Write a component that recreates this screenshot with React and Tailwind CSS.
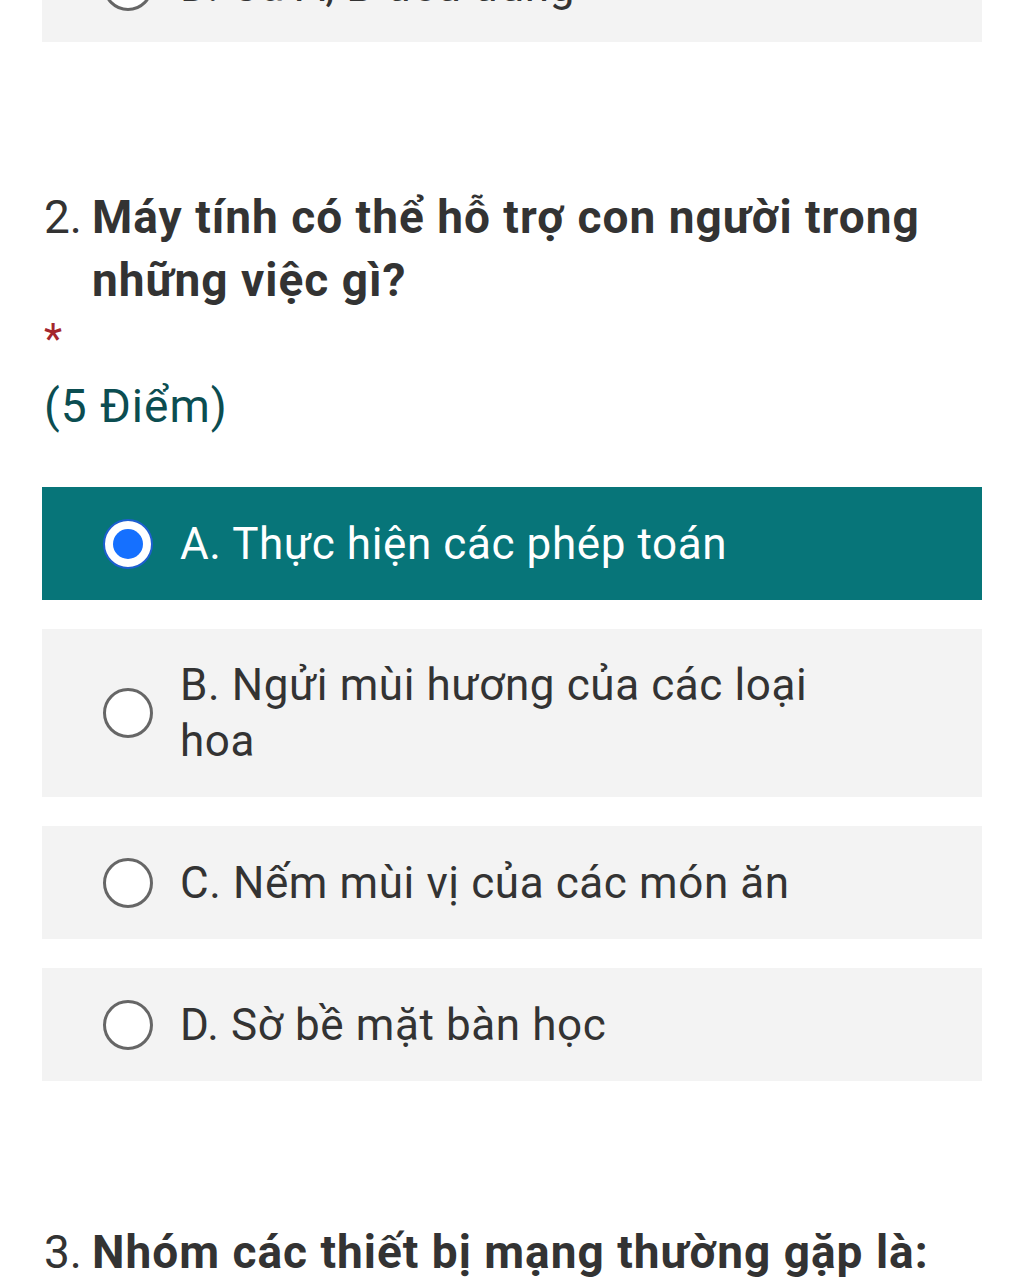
import React from "react";

const options = [
  { id: "A", text: "A. Thực hiện các phép toán", checked: true },
  { id: "B", text: "B. Ngửi mùi hương của các loại hoa" },
  { id: "C", text: "C. Nếm mùi vị của các món ăn" },
  { id: "D", text: "D. Sờ bề mặt bàn học" },
];

function Radio({ checked }) {
  if (checked) {
    return (
      <span className="flex h-[50px] w-[50px] shrink-0 items-center justify-center rounded-full border-2 border-[#1d5fd0] bg-white">
        <span className="h-[30px] w-[30px] rounded-full bg-[#1570ff]" />
      </span>
    );
  }
  return <span className="h-[50px] w-[50px] shrink-0 rounded-full border-[3px] border-[#666] bg-white" />;
}

function Option({ text, checked }) {
  return (
    <div
      className={`flex items-center gap-[27px] pl-[61px] pr-6 py-[28px] min-h-[113px] ${
        checked ? "bg-[#077579] text-white" : "bg-[#f3f3f3] text-[#333]"
      }`}
    >
      <Radio checked={checked} />
      <span className="max-w-[650px] text-[44px] leading-[56px] tracking-[0.6px]">{text}</span>
    </div>
  );
}

export default function App() {
  return (
    <div className="min-h-[1280px] overflow-hidden bg-white px-[42px] font-['Roboto','Noto_Sans',sans-serif] text-[#333]">
      <div className="-mt-[71px]">
        <Option text="D. Cả A, B đều đúng" />
      </div>

      <div className="pt-[144px]">
        <h2 className="flex text-[46px] leading-[63px] tracking-[1px]">
          <span className="w-[50px] shrink-0 pl-[2px] tracking-normal">2.</span>
          <span className="font-bold">Máy tính có thể hỗ trợ con người trong những việc gì?</span>
        </h2>
        <div className="mt-[6px] pl-[2px] text-[42px] leading-[42px] text-[#a4262c]">*</div>
        <div className="mt-[16px] pl-[2px] text-[46px] leading-[60px] tracking-[1px] text-[#0b4d51]">(5 Điểm)</div>
      </div>

      <div className="mt-[51px] flex flex-col gap-[29px]">
        {options.map((o) => (
          <Option key={o.id} text={o.text} checked={o.checked} />
        ))}
      </div>

      <h2 className="mt-[140px] flex text-[46px] leading-[63px] tracking-[1px]">
        <span className="w-[50px] shrink-0 pl-[2px] tracking-normal">3.</span>
        <span className="font-bold">Nhóm các thiết bị mạng thường gặp là:</span>
      </h2>
    </div>
  );
}
